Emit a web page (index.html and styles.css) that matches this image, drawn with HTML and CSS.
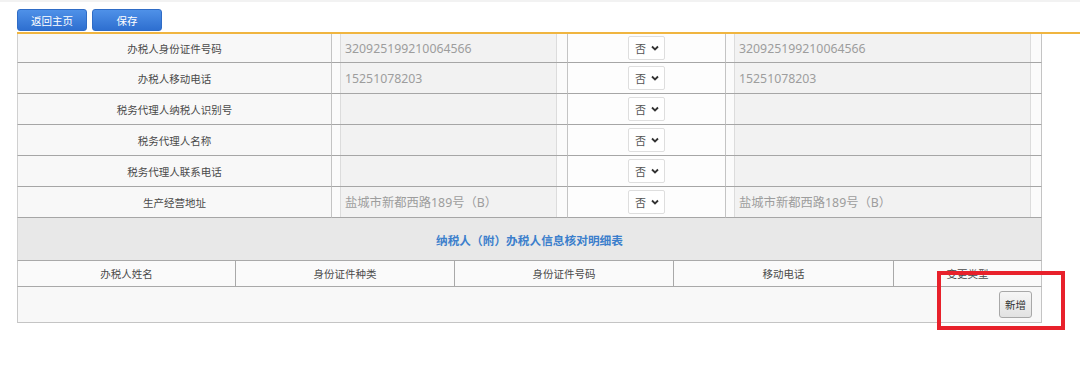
FILE: index.html
```html
<!DOCTYPE html>
<html lang="zh-CN">
<head>
    <meta charset="UTF-8">
    <title>纳税人信息核对</title>
    <link rel="stylesheet" href="styles.css">
</head>
<body>
    <div class="topstrip"></div>
    <div class="page">
        <div class="toolbar">
            <button class="btn">返回主页</button>
            <button class="btn">保存</button>
        </div>

        <table class="form">
            <colgroup>
                <col style="width: 315px">
                <col style="width: 236px">
                <col style="width: 158px">
                <col style="width: 316px">
            </colgroup>
            <tr class="first">
                <td class="label">办税人身份证件号码</td>
                <td class="cell"><input class="fld" type="text" value="320925199210064566" readonly></td>
                <td class="choice"><label class="pick"><select><option>否</option><option>是</option></select><svg viewBox="0 0 8 6"><path d="M1 1.5 L4 4.5 L7 1.5" /></svg></label></td>
                <td class="cell wide"><input class="fld" type="text" value="320925199210064566" readonly></td>
            </tr>
            <tr>
                <td class="label">办税人移动电话</td>
                <td class="cell"><input class="fld" type="text" value="15251078203" readonly></td>
                <td class="choice"><label class="pick"><select><option>否</option><option>是</option></select><svg viewBox="0 0 8 6"><path d="M1 1.5 L4 4.5 L7 1.5" /></svg></label></td>
                <td class="cell wide"><input class="fld" type="text" value="15251078203" readonly></td>
            </tr>
            <tr>
                <td class="label">税务代理人纳税人识别号</td>
                <td class="cell"><input class="fld" type="text" value="" readonly></td>
                <td class="choice"><label class="pick"><select><option>否</option><option>是</option></select><svg viewBox="0 0 8 6"><path d="M1 1.5 L4 4.5 L7 1.5" /></svg></label></td>
                <td class="cell wide"><input class="fld" type="text" value="" readonly></td>
            </tr>
            <tr>
                <td class="label">税务代理人名称</td>
                <td class="cell"><input class="fld" type="text" value="" readonly></td>
                <td class="choice"><label class="pick"><select><option>否</option><option>是</option></select><svg viewBox="0 0 8 6"><path d="M1 1.5 L4 4.5 L7 1.5" /></svg></label></td>
                <td class="cell wide"><input class="fld" type="text" value="" readonly></td>
            </tr>
            <tr>
                <td class="label">税务代理人联系电话</td>
                <td class="cell"><input class="fld" type="text" value="" readonly></td>
                <td class="choice"><label class="pick"><select><option>否</option><option>是</option></select><svg viewBox="0 0 8 6"><path d="M1 1.5 L4 4.5 L7 1.5" /></svg></label></td>
                <td class="cell wide"><input class="fld" type="text" value="" readonly></td>
            </tr>
            <tr>
                <td class="label">生产经营地址</td>
                <td class="cell"><input class="fld" type="text" value="盐城市新都西路189号（B）" readonly></td>
                <td class="choice"><label class="pick"><select><option>否</option><option>是</option></select><svg viewBox="0 0 8 6"><path d="M1 1.5 L4 4.5 L7 1.5" /></svg></label></td>
                <td class="cell wide"><input class="fld" type="text" value="盐城市新都西路189号（B）" readonly></td>
            </tr>
            <tr class="section">
                <td colspan="4">纳税人（附）办税人信息核对明细表</td>
            </tr>
        </table>

        <table class="detail">
            <colgroup>
                <col style="width: 219px">
                <col style="width: 219px">
                <col style="width: 219px">
                <col style="width: 220px">
                <col style="width: 148px">
            </colgroup>
            <tr class="head">
                <td>办税人姓名</td>
                <td>身份证件种类</td>
                <td>身份证件号码</td>
                <td>移动电话</td>
                <td>变更类型</td>
            </tr>
            <tr class="actions">
                <td colspan="5"><button class="add">新增</button></td>
            </tr>
        </table>

        <!-- annotation box drawn over the screenshot -->
        <div class="mark"></div>
    </div>
</body>
</html>
```

FILE: styles.css
```css
body {
    margin: 0;
    min-height: 373px;
    font-family: "Noto Sans CJK SC", "Noto Sans", sans-serif;
    color: #444;
    background: #fff;
}
.topstrip {
    height: 2px;
    background: #f2f2f2;
}
.page {
    position: relative;
    padding-left: 17px;
    padding-bottom: 50px;
}
.toolbar {
    display: flex;
    gap: 5px;
    padding-top: 7px;
    padding-bottom: 1px;
    border-bottom: 2px solid #f0b540;
}
.btn {
    width: 70px;
    height: 22px;
    padding: 0;
    border: 1px solid #2f6cc6;
    border-radius: 3px;
    background: linear-gradient(#4f91e8, #2e6fd0);
    color: #fff;
    font-family: "Noto Sans CJK SC", sans-serif;
    font-size: 10.5px;
    cursor: pointer;
}
table {
    width: 1025px;
    table-layout: fixed;
    border-collapse: separate;
    border-spacing: 0;
}
.form td {
    height: 30px;
    padding: 0;
    border-bottom: 1px solid #a6a6a6;
    border-right: 1px solid #c4c4c4;
    vertical-align: middle;
}
.form td:first-child {
    border-left: 1px solid #d0d0d0;
}
.form .first td {
    height: 28px;
}
.label {
    background: #f8f8f8;
    text-align: center;
    font-size: 10.5px;
    color: #4a4a4a;
}
.cell {
    background: #fbfbfb;
    padding-left: 8px !important;
}
.fld {
    display: block;
    box-sizing: border-box;
    width: 217px;
    height: 30px;
    margin: 0;
    padding: 0 0 0 4px;
    border: none;
    border-left: 1px solid #dcdcdc;
    border-right: 1px solid #dcdcdc;
    background: #f2f2f2;
    color: #9d9d9d;
    font-family: "Noto Sans", "Noto Sans CJK SC", sans-serif;
    font-size: 12.3px;
    outline: none;
}
.wide .fld {
    width: 297px;
}
.first .fld {
    height: 28px;
}
.choice {
    background: #fdfdfd;
}
.pick {
    position: relative;
    display: block;
    width: 37px;
    height: 24px;
    margin: 0 auto;
}
.pick select {
    appearance: none;
    -webkit-appearance: none;
    display: block;
    box-sizing: border-box;
    width: 37px;
    height: 24px;
    margin: 0;
    padding: 0 0 0 6px;
    border: 1px solid #dedede;
    border-radius: 2px;
    background: #fff;
    color: #555;
    font-family: "Noto Sans CJK SC", sans-serif;
    font-size: 11px;
}
.pick svg {
    position: absolute;
    right: 6px;
    top: 9px;
    width: 8px;
    height: 6px;
    pointer-events: none;
}
.pick path {
    fill: none;
    stroke: #333;
    stroke-width: 1.8;
}
.form .section td {
    height: 42px;
    background: #e8e8e8;
    border-bottom: 1px solid #a9a9a9;
    border-right: 1px solid #c4c4c4;
    text-align: center;
    color: #3c7fcc;
    font-size: 11.7px;
    font-weight: bold;
}
.detail td {
    padding: 0;
    border-right: 1px solid #a9a9a9;
    border-bottom: 1px solid #a9a9a9;
    text-align: center;
    font-size: 10.5px;
    color: #4a4a4a;
    background: #fafafa;
}
.detail td:first-child {
    border-left: 1px solid #c8c8c8;
}
.detail td:last-child {
    border-right: 1px solid #c4c4c4;
}
.detail .head td {
    height: 25px;
}
.detail .actions td {
    height: 35px;
    text-align: right;
    padding-right: 9px;
    border-bottom: 1px solid #c4c4c4;
    background: #f8f8f8;
}
.add {
    width: 33px;
    height: 27px;
    padding: 0;
    border: 1px solid #a8a8a8;
    border-radius: 3px;
    background: linear-gradient(#f6f6f6, #e2e2e2);
    color: #333;
    font-family: "Noto Sans CJK SC", sans-serif;
    font-size: 10.5px;
    vertical-align: middle;
}
.mark {
    position: absolute;
    left: 937px;
    top: 269px;
    width: 128px;
    height: 59px;
    box-sizing: border-box;
    border: 4px solid #e8212b;
}
```
